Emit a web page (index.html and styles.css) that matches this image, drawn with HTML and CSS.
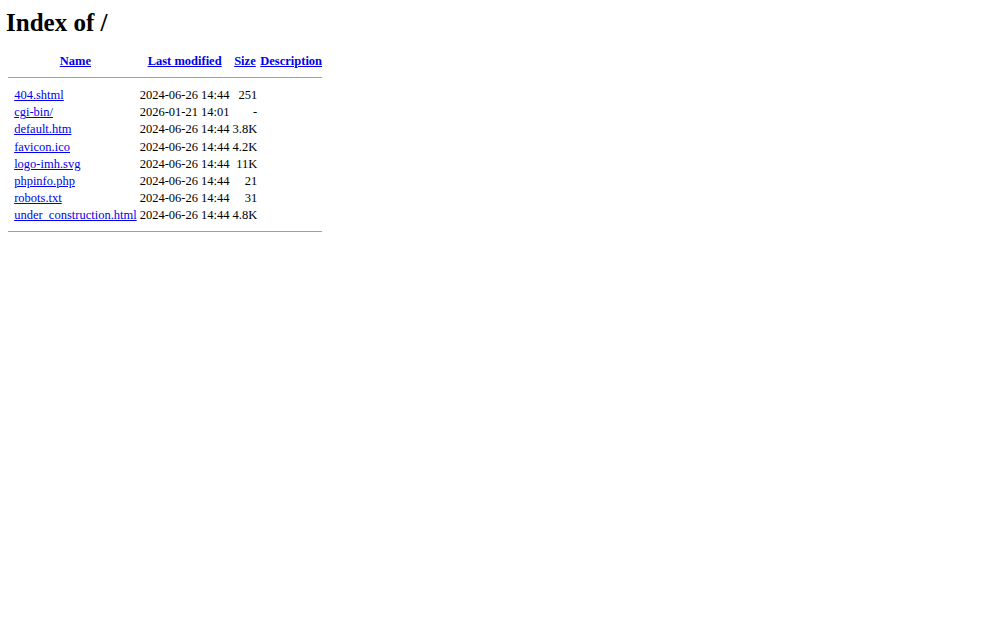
FILE: index.html
```html
<!DOCTYPE html>
<html lang="en">

  <head>
    <meta charset="UTF-8">
    <title>Index of /</title>
    <link rel="stylesheet" href="styles.css">
  </head>

  <body>
    <h1>Index of /</h1>
    <table class="listing">
      <tr>
        <th class="icon">&nbsp;</th>
        <th><a href="?C=N;O=D">Name</a></th>
        <th><a href="?C=M;O=A">Last modified</a></th>
        <th><a href="?C=S;O=A">Size</a></th>
        <th><a href="?C=D;O=A">Description</a></th>
      </tr>
      <tr>
        <th class="rule" colspan="5"><hr></th>
      </tr>
      <tr>
        <td class="icon">&nbsp;</td>
        <td><a href="404.shtml">404.shtml</a></td>
        <td class="num">2024-06-26 14:44</td>
        <td class="num">251</td>
        <td>&nbsp;</td>
      </tr>
      <tr>
        <td class="icon">&nbsp;</td>
        <td><a href="cgi-bin/">cgi-bin/</a></td>
        <td class="num">2026-01-21 14:01</td>
        <td class="num">-</td>
        <td>&nbsp;</td>
      </tr>
      <tr>
        <td class="icon">&nbsp;</td>
        <td><a href="default.htm">default.htm</a></td>
        <td class="num">2024-06-26 14:44</td>
        <td class="num">3.8K</td>
        <td>&nbsp;</td>
      </tr>
      <tr>
        <td class="icon">&nbsp;</td>
        <td><a href="favicon.ico">favicon.ico</a></td>
        <td class="num">2024-06-26 14:44</td>
        <td class="num">4.2K</td>
        <td>&nbsp;</td>
      </tr>
      <tr>
        <td class="icon">&nbsp;</td>
        <td><a href="logo-imh.svg">logo-imh.svg</a></td>
        <td class="num">2024-06-26 14:44</td>
        <td class="num">11K</td>
        <td>&nbsp;</td>
      </tr>
      <tr>
        <td class="icon">&nbsp;</td>
        <td><a href="phpinfo.php">phpinfo.php</a></td>
        <td class="num">2024-06-26 14:44</td>
        <td class="num">21</td>
        <td>&nbsp;</td>
      </tr>
      <tr>
        <td class="icon">&nbsp;</td>
        <td><a href="robots.txt">robots.txt</a></td>
        <td class="num">2024-06-26 14:44</td>
        <td class="num">31</td>
        <td>&nbsp;</td>
      </tr>
      <tr>
        <td class="icon">&nbsp;</td>
        <td><a href="under_construction.html">under_construction.html</a></td>
        <td class="num">2024-06-26 14:44</td>
        <td class="num">4.8K</td>
        <td>&nbsp;</td>
      </tr>
      <tr>
        <th class="rule" colspan="5"><hr></th>
      </tr>
    </table>
  </body>

</html>
```

FILE: styles.css
```css
html,
body {
  background: #fff;
  color: #000;
}

body {
  margin: 6px;
  font-family: "Liberation Serif", "Times New Roman", serif;
  font-size: 12.5px;
}

h1 {
  font-size: 25px;
  font-weight: bold;
  margin: 3px 0 15px;
}

a {
  color: #0000ee;
}

/* directory listing */
.listing {
  border-collapse: separate;
  border-spacing: 1px;
}

.listing th,
.listing td {
  padding: 1px;
  line-height: 14.15px;
  white-space: nowrap;
}

.listing th {
  font-weight: bold;
  text-align: center;
}

.listing td {
  text-align: left;
}

.listing .icon {
  vertical-align: top;
}

.listing .num {
  text-align: right;
}

.listing hr {
  margin: 6px 0 7px;
  border: none;
  border-top: 1px solid #a0a0a0;
  height: 0;
}
```
